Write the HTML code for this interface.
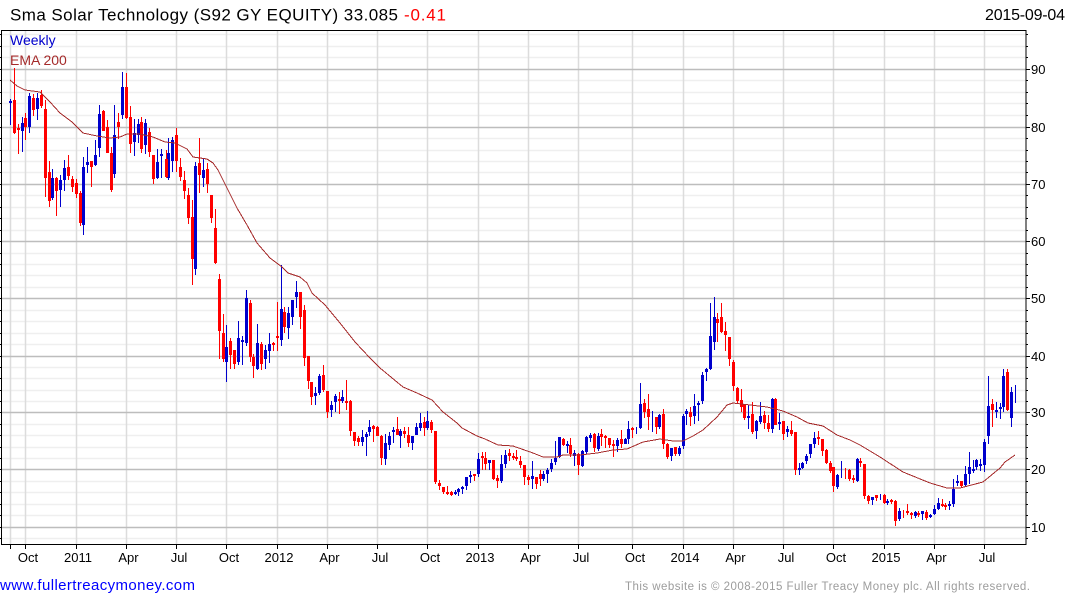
<!DOCTYPE html>
<html lang="en">
<head>
<meta charset="utf-8">
<title>Sma Solar Technology</title>
<style>
html,body{margin:0;padding:0;background:#fff;width:1075px;height:600px;overflow:hidden}
svg{display:block;position:absolute;left:0;top:0}
text{font-family:"Liberation Sans",Arial,sans-serif}
</style>
</head>
<body>
<svg width="1075" height="600" viewBox="0 0 1075 600" xmlns="http://www.w3.org/2000/svg">
<g fill="none" stroke-width="1.5">
<path stroke="#efefef" d="M2 34.5H1026M2 46.5H1026M2 57.5H1026M2 80.5H1026M2 92.5H1026M2 103.5H1026M2 115.5H1026M2 138.5H1026M2 150.5H1026M2 161.5H1026M2 172.5H1026M2 195.5H1026M2 207.5H1026M2 218.5H1026M2 230.5H1026M2 253.5H1026M2 264.5H1026M2 275.5H1026M2 287.5H1026M2 310.5H1026M2 321.5H1026M2 333.5H1026M2 344.5H1026M2 367.5H1026M2 378.5H1026M2 390.5H1026M2 401.5H1026M2 424.5H1026M2 435.5H1026M2 447.5H1026M2 458.5H1026M2 481.5H1026M2 492.5H1026M2 504.5H1026M2 515.5H1026M2 538.5H1026"/>
<path stroke="#dcdcdc" d="M10.5 31V544M25.5 31V544M76.5 31V544M126.5 31V544M176.5 31V544M226.5 31V544M277.5 31V544M327.5 31V544M377.5 31V544M427.5 31V544M478.5 31V544M528.5 31V544M578.5 31V544M632.5 31V544M683.5 31V544M733.5 31V544M783.5 31V544M833.5 31V544M884.5 31V544M934.5 31V544M984.5 31V544"/>
<path stroke="#bdbdbd" d="M2 69.5H1026M2 127.5H1026M2 184.5H1026M2 241.5H1026M2 298.5H1026M2 356.5H1026M2 412.5H1026M2 469.5H1026M2 527.5H1026"/>
</g>
<g shape-rendering="crispEdges" fill="none">
<path stroke="#0000cc" stroke-width="1" d="M10.5 99V125M22.5 117V152M29.5 93V133M37.5 93V120M52.5 169V200M60.5 175V207M64.5 160V191M83.5 157V235M87.5 147V173M95.5 140V166M99.5 105V157M114.5 105V178M122.5 72V119M134.5 119V156M138.5 119V143M145.5 119V154M157.5 149V179M161.5 149V178M168.5 138V180M172.5 137V172M195.5 162V275M203.5 159V187M226.5 325V382M238.5 321V365M242.5 336V365M246.5 290V346M257.5 324V370M265.5 345V369M269.5 333V363M281.5 265V346M288.5 307V339M292.5 300V325M296.5 281V308M315.5 387V405M319.5 374V395M331.5 401V417M335.5 394V412M342.5 390V403M362.5 430V446M366.5 432V456M369.5 420V436M385.5 434V465M389.5 432V450M393.5 427V443M400.5 429V448M412.5 436V450M416.5 423V435M420.5 413V431M427.5 411V430M455.5 490V495M458.5 488V496M462.5 486V494M466.5 477V490M470.5 471V483M478.5 453V477M489.5 460V470M501.5 455V483M505.5 450V468M532.5 461V489M543.5 471V481M547.5 468V483M551.5 459V472M555.5 441V465M559.5 437V458M567.5 441V453M574.5 450V466M582.5 450V467M586.5 436V454M590.5 433V442M598.5 433V451M617.5 438V452M625.5 438V444M628.5 421V444M636.5 427V434M640.5 383V429M652.5 411V432M659.5 414V429M671.5 448V461M679.5 446V456M683.5 414V449M686.5 409V425M694.5 394V424M698.5 401V421M702.5 372V404M706.5 368V381M710.5 303V370M714.5 297V350M748.5 405V429M756.5 420V439M760.5 402V424M772.5 398V433M779.5 413V430M787.5 426V437M799.5 463V475M802.5 462V469M806.5 454V464M810.5 444V458M814.5 432V448M837.5 474V489M841.5 461V478M857.5 458V482M872.5 497V505M880.5 494V500M887.5 499V505M899.5 508V521M915.5 511V518M922.5 511V520M930.5 514V518M934.5 505V515M938.5 498V510M949.5 501V510M953.5 479V507M957.5 475V486M965.5 466V486M969.5 452V484M973.5 460V473M976.5 459V470M980.5 459V471M984.5 439V472M988.5 376V444M996.5 402V418M1000.5 403V419M1003.5 369V412M1011.5 387V427M1015.5 385V403"/>
<path stroke="#0000cc" stroke-width="3" d="M10.5 101V103M22.5 123V131M29.5 96V127M37.5 98V109M52.5 178V198M60.5 180V190M64.5 168V180M83.5 167V225M87.5 162V165M95.5 155V165M99.5 114V148M114.5 135V174M122.5 87V115M134.5 133V142M138.5 124V135M145.5 123V145M157.5 162V178M161.5 154V156M168.5 153V178M172.5 140V161M195.5 166V269M203.5 170V178M226.5 347V362M238.5 338V362M242.5 340V342M246.5 298V343M257.5 343V369M265.5 350V359M269.5 344V351M281.5 309V340M288.5 313V328M292.5 300V317M296.5 292V297M315.5 393V396M319.5 376V393M331.5 405V410M335.5 396V402M342.5 397V401M362.5 437V442M366.5 434V437M369.5 427V432M385.5 443V459M389.5 436V445M393.5 430V432M400.5 431V436M412.5 436V443M416.5 427V435M420.5 423V428M427.5 421V428M455.5 492V494M458.5 489V492M462.5 487V489M466.5 477V486M470.5 475V477M478.5 459V474M489.5 460V463M501.5 464V481M505.5 455V464M532.5 476V479M543.5 474V479M547.5 470V474M551.5 463V469M555.5 458V462M559.5 437V457M567.5 444V446M574.5 453V456M582.5 451V466M586.5 437V452M590.5 435V438M598.5 436V449M617.5 440V446M625.5 439V444M628.5 429V439M640.5 404V428M659.5 415V427M671.5 448V456M679.5 448V454M683.5 416V446M686.5 411V414M694.5 406V416M698.5 403V405M702.5 375V401M706.5 369V372M710.5 336V369M714.5 317V342M748.5 416V418M756.5 421V431M760.5 416V422M772.5 399V429M779.5 422V424M787.5 429V432M799.5 468V470M802.5 463V468M806.5 456V461M810.5 444V454M814.5 438V444M837.5 475V487M857.5 459V481M872.5 497V500M887.5 501V503M899.5 511V519M915.5 512V516M922.5 511V514M930.5 515V517M934.5 509V514M938.5 503V509M949.5 504V506M953.5 489V504M957.5 481V483M965.5 474V485M969.5 467V474M973.5 469V471M976.5 460V467M980.5 464V466M984.5 442V465M988.5 406V436M996.5 410V412M1000.5 407V409M1003.5 376V407M1011.5 392V418"/>

<path stroke="#ff0000" stroke-width="1" d="M14.5 68V134M18.5 124V154M25.5 113V140M33.5 94V116M41.5 90V108M45.5 100V197M49.5 161V207M56.5 177V216M68.5 155V180M72.5 176V192M76.5 179V198M80.5 191V226M91.5 161V187M103.5 110V131M107.5 120V153M111.5 147V192M118.5 113V139M126.5 73V119M130.5 106V153M141.5 117V153M149.5 128V157M153.5 155V184M166.5 150V178M176.5 128V172M180.5 158V181M184.5 171V199M188.5 188V224M192.5 200V285M199.5 138V193M207.5 163V193M211.5 195V223M215.5 209V264M219.5 274V359M223.5 314V362M230.5 338V369M234.5 350V369M250.5 300V362M253.5 354V378M261.5 342V370M273.5 342V351M277.5 302V351M284.5 307V333M300.5 292V329M304.5 305V366M308.5 356V389M311.5 382V405M323.5 365V392M327.5 391V418M339.5 392V414M346.5 380V410M350.5 400V436M354.5 432V446M358.5 436V446M373.5 425V442M377.5 426V436M381.5 435V465M397.5 417V435M404.5 427V438M408.5 427V447M424.5 417V436M431.5 420V433M435.5 431V484M439.5 480V490M443.5 487V494M447.5 486V495M451.5 491V496M474.5 474V481M482.5 452V470M485.5 452V470M493.5 460V480M497.5 475V488M509.5 449V461M513.5 453V460M516.5 450V461M520.5 456V468M524.5 465V485M528.5 475V485M536.5 477V489M540.5 470V486M563.5 438V446M570.5 438V457M578.5 453V475M594.5 433V452M601.5 429V446M605.5 435V448M609.5 438V448M613.5 440V457M621.5 430V448M632.5 427V438M644.5 399V418M648.5 394V430M656.5 417V434M663.5 409V449M667.5 443V459M675.5 447V456M690.5 407V426M717.5 313V342M721.5 303V333M725.5 322V351M729.5 337V366M733.5 360V391M737.5 387V404M741.5 389V412M744.5 404V420M752.5 402V434M764.5 411V429M768.5 415V432M775.5 398V425M783.5 421V440M791.5 421V436M795.5 432V475M818.5 431V445M822.5 439V456M826.5 449V464M830.5 461V473M833.5 467V492M845.5 468V479M849.5 469V481M853.5 475V483M860.5 458V467M864.5 464V499M868.5 495V504M876.5 495V501M884.5 494V504M891.5 499V504M895.5 500V526M903.5 510V518M907.5 504V515M911.5 512V519M918.5 511V517M926.5 510V520M942.5 499V507M945.5 503V510M961.5 481V488M992.5 399V427M1007.5 369V411"/>
<path stroke="#ff0000" stroke-width="3" d="M14.5 100V133M18.5 128V130M25.5 118V127M33.5 98V110M41.5 95V106M45.5 109V178M49.5 172V201M56.5 178V191M68.5 167V176M72.5 179V187M76.5 183V194M80.5 193V223M91.5 161V167M103.5 111V131M107.5 127V153M111.5 153V190M118.5 122V127M126.5 87V118M130.5 117V144M141.5 122V149M149.5 132V152M153.5 155V179M166.5 159V177M176.5 135V161M180.5 167V177M184.5 180V191M188.5 195V218M192.5 217V259M199.5 163V175M207.5 169V184M211.5 195V218M215.5 228V263M219.5 279V331M223.5 333V359M230.5 341V355M234.5 350V364M250.5 303V357M253.5 357V366M261.5 344V364M273.5 343V345M277.5 336V338M284.5 312V327M300.5 292V317M304.5 310V358M308.5 356V381M311.5 382V397M323.5 375V390M327.5 391V412M339.5 399V401M346.5 401V403M350.5 401V431M354.5 432V441M358.5 438V442M373.5 426V429M377.5 427V436M381.5 436V458M397.5 429V435M404.5 431V434M408.5 435V443M424.5 422V428M431.5 422V430M435.5 431V482M439.5 483V486M443.5 487V492M447.5 492V494M451.5 492V495M474.5 474V476M482.5 456V458M485.5 458V464M493.5 460V479M497.5 478V481M509.5 453V456M513.5 456V458M516.5 457V459M520.5 461V465M524.5 465V477M528.5 477V480M536.5 477V484M540.5 474V479M563.5 439V445M570.5 445V454M578.5 454V465M594.5 434V448M601.5 434V437M605.5 436V438M609.5 438V445M613.5 444V446M621.5 439V444M632.5 428V430M644.5 403V412M648.5 409V417M656.5 417V427M663.5 414V444M667.5 444V457M675.5 447V454M690.5 412V417M717.5 319V323M721.5 317V332M725.5 331V335M729.5 337V359M733.5 362V386M737.5 388V401M741.5 400V407M744.5 404V418M752.5 414V432M764.5 415V423M768.5 423V429M775.5 399V425M783.5 421V434M791.5 430V434M795.5 432V470M818.5 437V439M822.5 439V451M826.5 450V463M830.5 463V471M833.5 467V486M849.5 470V479M853.5 478V480M860.5 461V463M864.5 464V496M868.5 496V501M876.5 495V498M884.5 495V503M891.5 500V502M895.5 501V521M907.5 511V513M911.5 513V515M918.5 513V515M926.5 512V518M942.5 504V506M945.5 505V507M961.5 481V486M992.5 404V410M1007.5 372V410"/>
<polyline stroke="#a52a2a" stroke-width="1" points="10,80 17,86 25,90 40,92 50,102 60,113 72,122 78,128 83,133 97,136 110,138 120,137 127,134 140,134 153,137 165,142 175,143 187,149 193,157 207,159 213,163 218,170 227,188 237,208 247,225 257,243 270,258 282,267 288,273 300,277 307,283 312,293 325,305 340,323 355,342 370,358 380,368 403,387 417,393 432,400 443,412 457,423 462,428 477,436 485,439 498,445 513,446 533,453 543,457 557,457 563,455 580,455 597,453 613,450 627,449 643,442 660,439 673,441 683,441 693,436 703,430 717,417 727,405 733,403 750,405 767,407 783,411 797,417 808,423 823,426 837,435 850,440 860,445 880,457 903,472 930,483 947,488 960,488 983,482 1000,468 1005,462 1015,455"/>
</g>

<g shape-rendering="crispEdges" fill="none" stroke="#000">
<path d="M1.5 30V544.5H1026V30.5H1M1 30.5H1026"/>
<path d="M0 34.5H2M0 46.5H2M0 57.5H2M0 69.5H2M0 80.5H2M0 92.5H2M0 103.5H2M0 115.5H2M0 127.5H2M0 138.5H2M0 150.5H2M0 161.5H2M0 172.5H2M0 184.5H2M0 195.5H2M0 207.5H2M0 218.5H2M0 230.5H2M0 241.5H2M0 253.5H2M0 264.5H2M0 275.5H2M0 287.5H2M0 298.5H2M0 310.5H2M0 321.5H2M0 333.5H2M0 344.5H2M0 356.5H2M0 367.5H2M0 378.5H2M0 390.5H2M0 401.5H2M0 412.5H2M0 424.5H2M0 435.5H2M0 447.5H2M0 458.5H2M0 469.5H2M0 481.5H2M0 492.5H2M0 504.5H2M0 515.5H2M0 527.5H2M0 538.5H2"/>
<path d="M1026 34.5H1028M1026 46.5H1028M1026 57.5H1028M1026 69.5H1030M1026 80.5H1028M1026 92.5H1028M1026 103.5H1028M1026 115.5H1028M1026 127.5H1030M1026 138.5H1028M1026 150.5H1028M1026 161.5H1028M1026 172.5H1028M1026 184.5H1030M1026 195.5H1028M1026 207.5H1028M1026 218.5H1028M1026 230.5H1028M1026 241.5H1030M1026 253.5H1028M1026 264.5H1028M1026 275.5H1028M1026 287.5H1028M1026 298.5H1030M1026 310.5H1028M1026 321.5H1028M1026 333.5H1028M1026 344.5H1028M1026 356.5H1030M1026 367.5H1028M1026 378.5H1028M1026 390.5H1028M1026 401.5H1028M1026 412.5H1030M1026 424.5H1028M1026 435.5H1028M1026 447.5H1028M1026 458.5H1028M1026 469.5H1030M1026 481.5H1028M1026 492.5H1028M1026 504.5H1028M1026 515.5H1028M1026 527.5H1030M1026 538.5H1028"/>
<path d="M10.5 544V549M25.5 544V549M76.5 544V549M126.5 544V549M176.5 544V549M226.5 544V549M277.5 544V549M327.5 544V549M377.5 544V549M427.5 544V549M478.5 544V549M528.5 544V549M578.5 544V549M632.5 544V549M683.5 544V549M733.5 544V549M783.5 544V549M833.5 544V549M884.5 544V549M934.5 544V549M984.5 544V549"/>
</g>

<text x="10" y="20.5" font-size="17" fill="#000" textLength="388" lengthAdjust="spacing">Sma Solar Technology (S92 GY EQUITY) 33.085</text>
<text x="404" y="20.5" font-size="17" fill="#ff0000" textLength="42" lengthAdjust="spacing">-0.41</text>
<text x="985" y="20" font-size="16" fill="#000" textLength="80" lengthAdjust="spacing">2015-09-04</text>
<text x="10" y="45" font-size="14" fill="#0000cc">Weekly</text>
<text x="10" y="65" font-size="14" fill="#a52a2a">EMA 200</text>

<g font-size="13" fill="#000">
<text x="1031" y="74">90</text><text x="1031" y="132">80</text><text x="1031" y="189">70</text><text x="1031" y="246">60</text><text x="1031" y="303">50</text><text x="1031" y="361">40</text><text x="1031" y="417">30</text><text x="1031" y="474">20</text><text x="1031" y="532">10</text>
</g>
<g font-size="13" fill="#000" text-anchor="middle">
<text x="28" y="562">Oct</text><text x="78" y="562">2011</text><text x="128.500" y="562">Apr</text><text x="179" y="562">Jul</text><text x="229" y="562">Oct</text><text x="279" y="562">2012</text><text x="329.500" y="562">Apr</text><text x="380" y="562">Jul</text><text x="430" y="562">Oct</text><text x="480" y="562">2013</text><text x="530.500" y="562">Apr</text><text x="581" y="562">Jul</text><text x="635" y="562">Oct</text><text x="685" y="562">2014</text><text x="735.500" y="562">Apr</text><text x="786" y="562">Jul</text><text x="836" y="562">Oct</text><text x="886" y="562">2015</text><text x="936.500" y="562">Apr</text><text x="987" y="562">Jul</text>
</g>
<text x="0" y="590" font-size="15" fill="#0000ff" textLength="195" lengthAdjust="spacing">www.fullertreacymoney.com</text>
<text x="625" y="590" font-size="11.500" fill="#9c9c9c" textLength="405" lengthAdjust="spacing">This website is © 2008-2015 Fuller Treacy Money plc. All rights reserved.</text>
</svg>
</body>
</html>
